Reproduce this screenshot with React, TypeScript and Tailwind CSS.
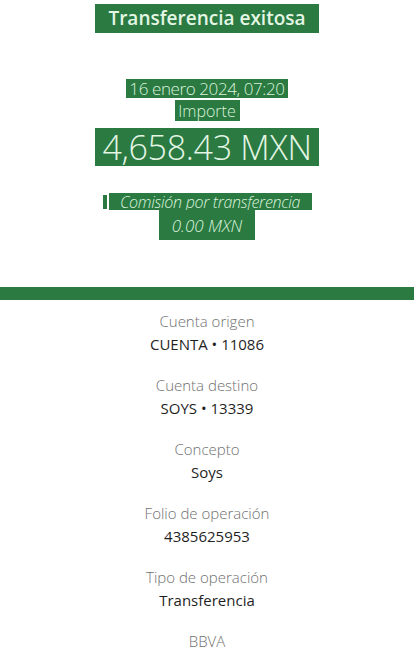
const rows = [
  { label: 'Cuenta origen', value: 'CUENTA • 11086' },
  { label: 'Cuenta destino', value: 'SOYS • 13339' },
  { label: 'Concepto', value: 'Soys' },
  { label: 'Folio de operación', value: '4385625953' },
  { label: 'Tipo de operación', value: 'Transferencia' },
];

export default function App() {
  return (
    <div className="w-[414px] h-[661px] overflow-hidden bg-white font-['Open_Sans','Lato',sans-serif] text-center">
      {/* Header */}
      <div className="flex flex-col items-center">
        <div className="mt-[4px] h-[29px] w-[224px] bg-[#2a7a42] flex items-center justify-center">
          <span className="text-[19px] font-semibold text-[#e4f6e4] leading-none">Transferencia exitosa</span>
        </div>

        <div className="mt-[46px] h-[19px] w-[162px] bg-[#2a7a42] flex items-center justify-center">
          <span className="text-[17px] font-light text-[#dcf3dc] leading-none tracking-[-0.4px]">16 enero 2024, 07:20</span>
        </div>
        <div className="mt-[2px] h-[21px] w-[65px] bg-[#2a7a42] flex items-center justify-center">
          <span className="text-[16px] font-light text-[#dcf3dc] leading-none">Importe</span>
        </div>
        <div className="mt-[7px] h-[38px] w-[224px] bg-[#2a7a42] flex items-center justify-center">
          <span className="text-[34px] font-light text-[#e4f6e4] leading-none tracking-[-0.3px]">4,658.43 MXN</span>
        </div>

        <div className="mt-[27px] h-[17px] flex items-center gap-[2px]">
          <span className="w-[4px] h-[14px] bg-[#2a7a42]" />
          <span className="h-[17px] w-[203px] bg-[#2a7a42] flex items-center justify-center text-[16px] italic font-light text-[#dcf3dc] leading-none tracking-[-0.3px]">
            Comisión por transferencia
          </span>
        </div>
        <div className="h-[30px] w-[96px] bg-[#2a7a42] flex items-center justify-center">
          <span className="text-[17px] italic font-light text-[#dcf3dc] leading-none">0.00 MXN</span>
        </div>
      </div>

      <div className="mt-[47px] h-[13px] w-full bg-[#2a7a42]" />

      {/* Details */}
      <div className="flex flex-col items-center pt-[11px]">
        {rows.map(r => (
          <div key={r.label} className="h-[64px] flex flex-col items-center">
            <div className="h-[20px] leading-[20px] text-[15px] font-light text-[#6f6f6f]">{r.label}</div>
            <div className="mt-[3px] h-[20px] leading-[20px] text-[15px] text-[#1f1f1f]">{r.value}</div>
          </div>
        ))}
        <div className="h-[20px] leading-[20px] text-[15px] font-light text-[#6f6f6f]">BBVA</div>
      </div>
    </div>
  );
}
